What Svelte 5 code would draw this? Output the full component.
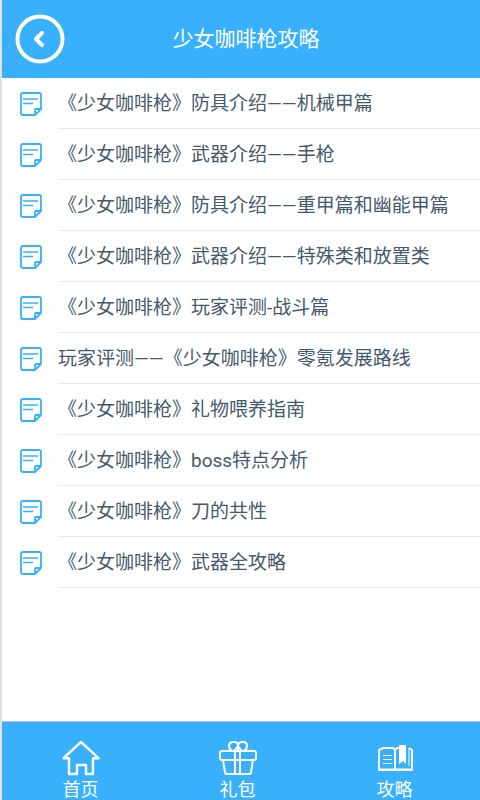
<script lang="ts">
  const guides = [
    '《少女咖啡枪》防具介绍——机械甲篇',
    '《少女咖啡枪》武器介绍——手枪',
    '《少女咖啡枪》防具介绍——重甲篇和幽能甲篇',
    '《少女咖啡枪》武器介绍——特殊类和放置类',
    '《少女咖啡枪》玩家评测-战斗篇',
    '玩家评测——《少女咖啡枪》零氪发展路线',
    '《少女咖啡枪》礼物喂养指南',
    '《少女咖啡枪》boss特点分析',
    '《少女咖啡枪》刀的共性',
    '《少女咖啡枪》武器全攻略',
  ];

  const goBack = () => history.back();
</script>

<div class="page">
  <header>
    <button class="back" type="button" aria-label="返回" onclick={goBack}>
      <svg width="50" height="50" viewBox="0 0 50 50" fill="none" stroke="#fff">
        <circle cx="25" cy="25" r="22.5" stroke-width="4" />
        <path d="M27 19l-6 6 6 6" stroke-width="4" stroke-linecap="round" stroke-linejoin="round" />
      </svg>
    </button>
    <h1>少女咖啡枪攻略</h1>
  </header>

  <main>
    <ul>
      {#each guides as title}
        <li>
          <svg class="note" width="22" height="24" viewBox="0 0 22 24" fill="none" stroke="#38b0fc">
            <path d="M3 1h16q2 0 2 2v14l-6 6H3q-2 0-2-2V3q0-2 2-2z" stroke-width="1.800" stroke-linejoin="round" />
            <path d="M15 22v-4q0-1 1-1h5" stroke-width="1.800" />
            <path d="M3 7h15M3 11.500h10" stroke-width="1.600" />
          </svg>
          <a href="#guide">{title}</a>
        </li>
      {/each}
    </ul>
  </main>

  <nav>
    <a href="#home">
      <svg width="40" height="36" viewBox="0 0 40 36" fill="none" stroke="#fff" stroke-width="2.400">
        <path d="M20 2L2.500 18.200H8V34h8v-9h9v9h7V18.200h5.500z" stroke-linejoin="round" />
      </svg>
      <span>首页</span>
    </a>
    <a href="#gift">
      <svg width="40" height="36" viewBox="0 0 40 36" fill="none" stroke="#fff" stroke-width="2">
        <rect x="2" y="11" width="36" height="9" rx="2" />
        <path d="M5 20l2 12q0 2 2 2h22q2 0 2-2l2-12M17 11v23M22 11v23" />
        <path d="M14 11q-3-2-3-5 0-4 4-4h1q4 0 4 4v4M20 6q0-4 4-4h1q4 0 4 4 0 3-3 5M20 6l-4 5M20 6l4 5" />
      </svg>
      <span>礼包</span>
    </a>
    <a href="#guides">
      <svg width="40" height="36" viewBox="0 0 40 36" fill="none" stroke="#fff" stroke-width="2">
        <path d="M24 8h-2l-2 2-2-2H8L4 10v20h33V10l-3-2M20 9v21" />
        <path d="M3 29.500h35" />
        <path d="M8 15.500h9M8 19.500h9M8 23.500h9" stroke-width="1.200" />
        <path d="M24 5h7v19l-3-3-4 3z" fill="#fff" stroke="none" />
        <path d="M34 8v18" stroke-width="1" />
      </svg>
      <span>攻略</span>
    </a>
  </nav>
</div>

<style>
  :global(body) {
    margin: 0;
    background: #fff;
  }
  .page {
    display: flex;
    flex-direction: column;
    box-sizing: border-box;
    min-height: 100vh;
    border-left: 2px solid #e0e0e0;
    font-family: Roboto, "Noto Sans CJK SC", sans-serif;
  }
  header {
    display: grid;
    grid-template-columns: 76px 1fr 76px;
    align-items: center;
    height: 78px;
    background: #38b0fc;
    color: #fff;
  }
  .back {
    justify-self: start;
    width: 50px;
    height: 50px;
    margin-left: 13px;
    padding: 0;
    border: 0;
    background: none;
    cursor: pointer;
  }
  .back svg { display: block; }
  h1 {
    margin: 0;
    font-size: 21px;
    font-weight: 400;
    line-height: 30px;
    text-align: center;
    padding-left: 10px;
  }

  main { flex: 1; }
  ul {
    margin: 0;
    padding: 0;
    list-style: none;
  }
  li {
    display: flex;
    align-items: center;
    padding-left: 18px;
  }
  .note {
    flex: none;
    margin-right: 16px;
  }
  li a {
    flex: 1;
    padding-top: 2px;
    border-bottom: 1px solid #e8e8e8;
    color: #45596c;
    font-size: 19px;
    line-height: 48px;
    text-decoration: none;
    white-space: nowrap;
  }

  nav {
    display: grid;
    grid-template-columns: repeat(3, 1fr);
    padding: 18px 7px 0 0;
    border-top: 1px solid #b5c4ce;
    background: #38b0fc;
  }
  nav a {
    display: flex;
    flex-direction: column;
    align-items: center;
    gap: 4px;
    color: #fff;
    font-size: 18px;
    line-height: 20px;
    text-decoration: none;
  }
</style>
